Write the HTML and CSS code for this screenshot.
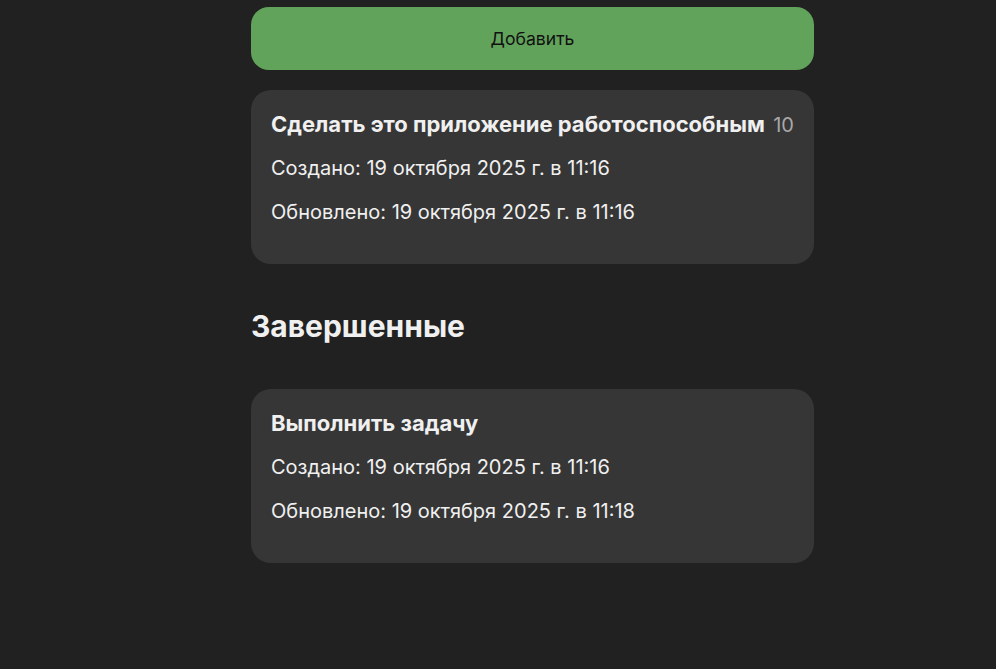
FILE: index.html
```html
<!DOCTYPE html>
<html lang="ru">
<head>
<meta charset="utf-8">
<title>Задачи</title>
<link rel="stylesheet" href="styles.css">
</head>
<body>
<main class="container">
  <button class="add-btn" type="button">Добавить</button>
  <section class="list">
    <article class="card">
      <div class="card-head">
        <h3 class="card-title">Сделать это приложение работоспособным</h3>
        <span class="card-count">10</span>
      </div>
      <p class="card-line">Создано: 19 октября 2025 г. в 11:16</p>
      <p class="card-line">Обновлено: 19 октября 2025 г. в 11:16</p>
    </article>
  </section>
  <h2 class="section-title">Завершенные</h2>
  <section class="list">
    <article class="card">
      <div class="card-head">
        <h3 class="card-title">Выполнить задачу</h3>
      </div>
      <p class="card-line">Создано: 19 октября 2025 г. в 11:16</p>
      <p class="card-line">Обновлено: 19 октября 2025 г. в 11:18</p>
    </article>
  </section>
</main>
</body>
</html>
```
FILE: styles.css
```css
html, body {
  margin: 0;
  padding: 0;
  background: #212121;
  color: #f0f0f0;
  font-family: Inter, "Noto Sans", sans-serif;
}
.container {
  width: 563px;
  margin: 0 0 0 251px;
  padding-top: 7px;
  display: flex;
  flex-direction: column;
}
.add-btn {
  height: 63px;
  border: none;
  border-radius: 18px;
  background: #62a35c;
  color: #111;
  font-family: Inter, sans-serif;
  font-size: 17.6px;
  padding: 0;
}
.list {
  margin-top: 20px;
  display: flex;
  flex-direction: column;
}
.card {
  background: #363636;
  border-radius: 20px;
  padding: 20px 20px 41px;
  height: 174px;
  box-sizing: border-box;
}
.card-head {
  display: flex;
  align-items: baseline;
  justify-content: space-between;
  height: 28px;
}
.card-title {
  margin: 0;
  flex: none;
  white-space: nowrap;
  font-size: 22px;
  font-weight: 700;
  line-height: 28px;
}
.card-count {
  font-size: 20px;
  color: #a8a8a8;
  line-height: 28px;
}
.card-line {
  margin: 16px 0 0;
  font-size: 20px;
  line-height: 28px;
}
.section-title {
  margin: 45px 0 46px;
  font-size: 30px;
  font-weight: 700;
  line-height: 34px;
}
.section-title + .list {
  margin-top: 0;
}
```
